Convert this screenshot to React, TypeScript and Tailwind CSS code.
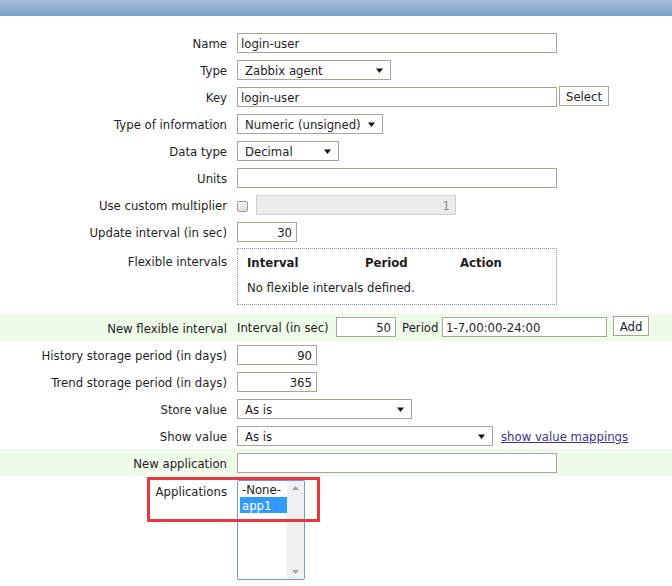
import React from "react";

function Arrow() {
  return (
    <svg width="7" height="5" viewBox="0 0 7 5" className="shrink-0">
      <path d="M0 0.5H7L3.5 5Z" fill="#111" />
    </svg>
  );
}

function Row({
  label,
  children,
  green,
}: {
  label: string;
  children: React.ReactNode;
  green?: boolean;
}) {
  return (
    <div className={green ? "flex h-[27px] bg-[#edfbe8]" : "flex h-[27px]"}>
      <div className="w-[227px] h-[27px] pt-[2px] flex items-center justify-end whitespace-nowrap">{label}</div>
      <div className="ml-[10px] pt-[4px] flex items-start">{children}</div>
    </div>
  );
}

function Input({ w, value, right }: { w: string; value?: string; right?: boolean }) {
  return (
    <div
      className={`${w} h-[20px] pt-[2px] border border-[#a9a699] bg-white flex items-center whitespace-nowrap ${
        right ? "justify-end pr-[4px]" : "pl-[3px]"
      }`}
    >
      {value}
    </div>
  );
}

function Select({ w, value }: { w: string; value: string }) {
  return (
    <div className={`${w} h-[20px] border border-[#a9a699] bg-white flex items-center justify-between pl-[7px] pr-[7px] whitespace-nowrap`}>
      <span className="pt-[2px]">{value}</span>
      <Arrow />
    </div>
  );
}

function Button({ w, label }: { w: string; label: string }) {
  return (
    <div className={`${w} h-[20px] pt-[2px] border border-[#a9a699] bg-white flex items-center justify-center`}>{label}</div>
  );
}

export default function App() {
  return (
    <div className="relative w-[672px] h-[586px] bg-white overflow-hidden font-['DejaVu_Sans',sans-serif] text-[11.7px] leading-[16px] text-[#1e1e1e]">
      <div className="h-[16px] bg-gradient-to-b from-[#a7c0d9] to-[#7a9fc5]" />
      <div className="pt-[13px]">
        <Row label="Name">
          <Input w="w-[320px]" value="login-user" />
        </Row>
        <Row label="Type">
          <Select w="w-[154px]" value="Zabbix agent" />
        </Row>
        <Row label="Key">
          <Input w="w-[320px]" value="login-user" />
          <div className="ml-[2px] -mt-[1px]">
            <Button w="w-[50px]" label="Select" />
          </div>
        </Row>
        <Row label="Type of information">
          <Select w="w-[146px]" value="Numeric (unsigned)" />
        </Row>
        <Row label="Data type">
          <Select w="w-[102px]" value="Decimal" />
        </Row>
        <Row label="Units">
          <Input w="w-[320px]" />
        </Row>
        <Row label="Use custom multiplier">
          <div className="mt-[6px] w-[11px] h-[11px] rounded-[2px] border border-[#9c9c9c] bg-gradient-to-b from-[#f4f4f4] to-[#dcdcdc]" />
          <div className="ml-[8px] w-[200px] h-[20px] pt-[2px] border border-[#cfcfcf] bg-[#ebebeb] flex items-center justify-end pr-[5px] text-[#8a8a8a]">
            1
          </div>
        </Row>
        <Row label="Update interval (in sec)">
          <Input w="w-[60px]" value="30" right />
        </Row>

        <div className="flex h-[69px]">
          <div className="w-[227px] pt-[9px] text-right">Flexible intervals</div>
          <div className="ml-[10px] mt-[3px] w-[320px] h-[57px] border border-dotted border-[#7d97c6] pl-[9px] pt-[6px]">
            <div className="flex font-bold">
              <div className="w-[118px]">Interval</div>
              <div className="w-[95px]">Period</div>
              <div>Action</div>
            </div>
            <div className="mt-[9px]">No flexible intervals defined.</div>
          </div>
        </div>

        <div className="flex h-[27px] bg-[#edfbe8]">
          <div className="w-[227px] h-[27px] flex items-center justify-end pt-[3px]">New flexible interval</div>
          <div className="ml-[10px] pt-[3px] flex items-start">
            <div className="w-[99px] h-[20px] pt-[2px] flex items-center whitespace-nowrap">Interval (in sec)</div>
            <Input w="w-[60px]" value="50" right />
            <div className="ml-[6px] w-[40px] h-[20px] pt-[2px] flex items-center">Period</div>
            <Input w="w-[165px]" value="1-7,00:00-24:00" />
            <div className="ml-[6px] -mt-[1px]">
              <Button w="w-[36px]" label="Add" />
            </div>
          </div>
        </div>

        <Row label="History storage period (in days)">
          <Input w="w-[80px]" value="90" right />
        </Row>
        <Row label="Trend storage period (in days)">
          <Input w="w-[80px]" value="365" right />
        </Row>
        <Row label="Store value">
          <Select w="w-[175px]" value="As is" />
        </Row>
        <Row label="Show value">
          <Select w="w-[256px]" value="As is" />
          <a className="ml-[8px] h-[20px] pt-[2px] flex items-center underline text-[#41318f] whitespace-nowrap">show value mappings</a>
        </Row>
        <Row label="New application" green>
          <Input w="w-[320px]" />
        </Row>

        <div className="flex">
          <div className="w-[227px] pt-[8px] text-right">Applications</div>
          <div className="ml-[10px] mt-[4px] w-[68px] h-[100px] border border-[#6f98e0] rounded-[2px] flex overflow-hidden bg-white">
            <div className="flex-1 pl-[2px]">
              <div className="h-[16px] pl-[2px] pt-[1px] flex items-center">-None-</div>
              <div className="h-[16px] pl-[2px] pt-[1px] flex items-center bg-[#3399ff] text-white">app1</div>
            </div>
            <div className="w-[17px] bg-[#f0f0f0] flex flex-col items-center justify-between py-[5px]">
              <svg width="7" height="4" viewBox="0 0 7 4">
                <path d="M0 4L3.5 0L7 4Z" fill="#a3a3a3" />
              </svg>
              <svg width="7" height="4" viewBox="0 0 7 4">
                <path d="M0 0H7L3.5 4Z" fill="#a3a3a3" />
              </svg>
            </div>
          </div>
        </div>
      </div>

      <div className="absolute left-[147px] top-[477px] w-[173px] h-[45px] border-[3px] border-[#e8383d]" />
    </div>
  );
}
